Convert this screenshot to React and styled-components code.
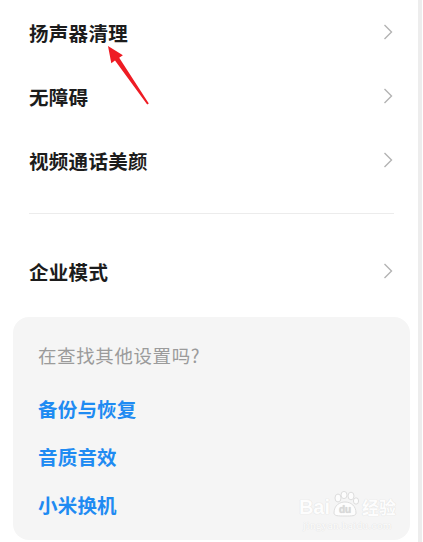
import React from "react";
import styled, { createGlobalStyle } from "styled-components";

const GlobalStyle = createGlobalStyle`
  html, body {
    margin: 0;
    padding: 0;
    background: #ffffff;
  }
  body {
    font-family: "Noto Sans CJK SC", "Noto Sans", sans-serif;
  }
`;

const Screen = styled("div")`
  display: flex;
  width: 423px;
  height: 542px;
  overflow: hidden;
  position: relative;
`;

const Main = styled("div")`
  width: 418px;
  display: flex;
  flex-direction: column;
`;

const ScrollTrack = styled("div")`
  width: 4px;
  background-color: #ededed;
`;

const Row = styled("div")`
  height: 64px;
  display: flex;
  align-items: center;
  justify-content: space-between;
  padding: 0 25px 0 29px;
`;

const RowLabel = styled("span")`
  font-size: 19.5px;
  font-weight: 600;
  color: #1c1c1c;
  letter-spacing: 0.3px;
`;

const Divider = styled("div")`
  height: 1px;
  margin: 21px 24px 25px 29px;
  background-color: #ececec;
`;

const Card = styled("div")`
  margin: 14px 8px 0 13px;
  height: 223px;
  box-sizing: border-box;
  padding: 26px 25px 0;
  background-color: #f5f5f5;
  border-radius: 16px;
  display: flex;
  flex-direction: column;
  position: relative;
`;

const CardTitle = styled("div")`
  font-size: 18.5px;
  line-height: 24px;
  color: #9b9b9b;
  margin-bottom: 17px;
  letter-spacing: 0.6px;
`;

const CardLink = styled("div")`
  height: 48px;
  display: flex;
  align-items: center;
  font-size: 19.5px;
  font-weight: 600;
  color: #1f8bf2;
  letter-spacing: 0.2px;
`;

const Watermark = styled("div")`
  position: absolute;
  right: 14px;
  bottom: 9px;
  display: flex;
  flex-direction: column;
  align-items: center;
  color: #ffffff;
  opacity: 0.85;
  font-family: "Liberation Sans", sans-serif;
`;

const WatermarkLogo = styled("div")`
  display: flex;
  align-items: flex-end;
  font-size: 20px;
  font-weight: 700;
  line-height: 20px;
  text-shadow: 0 0 1px #dcdcdc, 0 0 1px #dcdcdc;
`;

const WatermarkCn = styled("span")`
  font-family: "Noto Sans CJK SC", sans-serif;
  font-size: 17px;
  margin-left: 2px;
`;

const WatermarkUrl = styled("div")`
  font-family: "Liberation Serif", serif;
  font-size: 11px;
  letter-spacing: 0.4px;
  margin-top: 2px;
  text-shadow: 0 0 1px #dcdcdc, 0 0 1px #dcdcdc;
`;

const ArrowMark = styled("svg")`
  position: absolute;
  left: 100px;
  top: 40px;
`;

const Chevron = () => (
  <svg width="10" height="16" viewBox="0 0 10 16">
    <path d="M1.5 1 L8.5 8 L1.5 15" fill="none" stroke="#b3b3b3" strokeWidth="1.4" />
  </svg>
);

const Paw = () => (
  <svg width="30" height="26" viewBox="0 0 30 26">
    <g fill="#ffffff" stroke="#dadada" strokeWidth="1">
      <ellipse cx="8" cy="7" rx="3" ry="4" />
      <ellipse cx="14" cy="4" rx="3" ry="3.6" />
      <ellipse cx="21" cy="5" rx="3" ry="3.8" />
      <ellipse cx="26" cy="10" rx="2.6" ry="3.2" />
      <path d="M4 22 C4 14 10 11 15 11 C21 11 26 15 26 22 C26 25 22 25 15 25 C8 25 4 25 4 22 Z" />
    </g>
    <text x="15" y="22" textAnchor="middle" fontSize="10" fontWeight="700" fill="#d4d4d4" fontFamily="Liberation Sans, sans-serif">du</text>
  </svg>
);

const settings = ["扬声器清理", "无障碍", "视频通话美颜"];
const links = ["备份与恢复", "音质音效", "小米换机"];

const App = () => {
  return (
    <Screen>
      <GlobalStyle />
      <Main>
        {settings.map((label) => (
          <Row key={label}>
            <RowLabel>{label}</RowLabel>
            <Chevron />
          </Row>
        ))}
        <Divider />
        <Row>
          <RowLabel>企业模式</RowLabel>
          <Chevron />
        </Row>
        <Card>
          <CardTitle>在查找其他设置吗?</CardTitle>
          {links.map((label) => (
            <CardLink key={label}>{label}</CardLink>
          ))}
          <Watermark>
            <WatermarkLogo>
              Bai
              <Paw />
              <WatermarkCn>经验</WatermarkCn>
            </WatermarkLogo>
            <WatermarkUrl>jingyan.baidu.com</WatermarkUrl>
          </Watermark>
        </Card>
      </Main>
      <ScrollTrack />
      {/* red annotation arrow */}
      <ArrowMark width="60" height="70" viewBox="0 0 60 70">
        <path d="M8 6 L22.9 15.2 L19.2 17.8 L48.8 63.4 L47.2 64.6 L15 20.6 L11.3 23.2 Z" fill="#ee1c24" />
      </ArrowMark>
    </Screen>
  );
};

export default App;
